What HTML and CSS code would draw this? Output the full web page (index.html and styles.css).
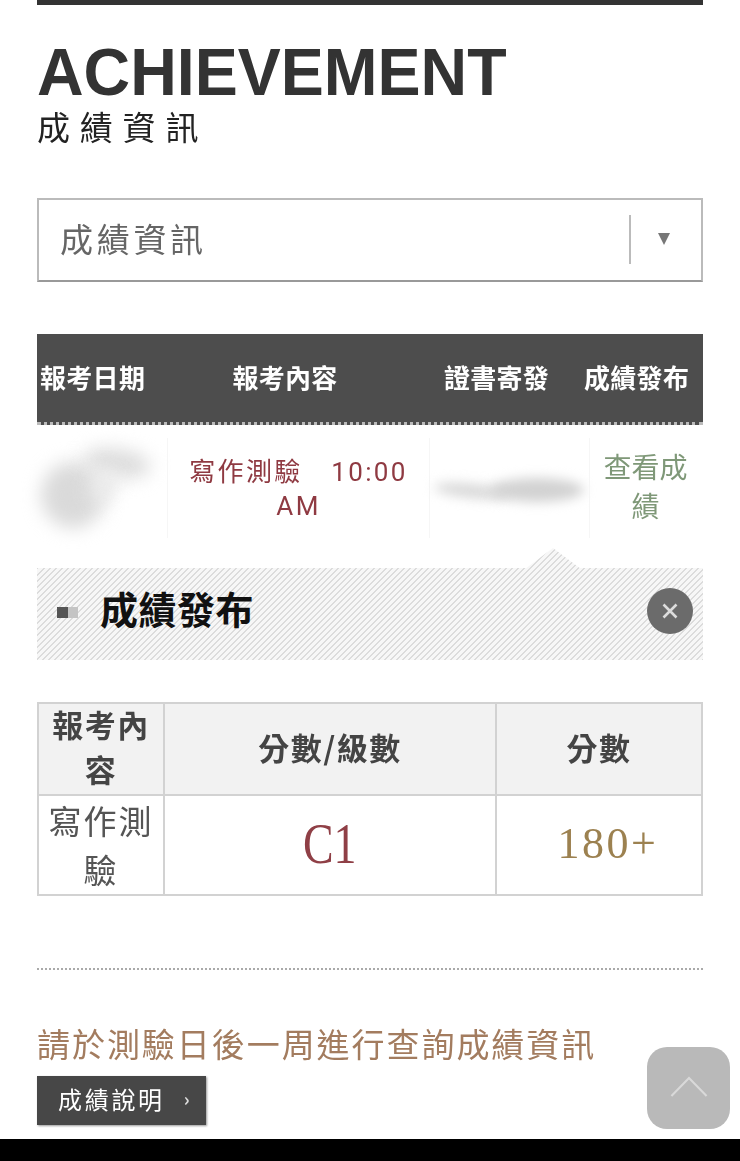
FILE: index.html
```html
<!DOCTYPE html>
<html lang="zh-Hant">
<head>
<meta charset="utf-8">
<title>成績資訊</title>
<link rel="stylesheet" href="styles.css">
</head>
<body>
<main class="page">
  <header class="heading">
    <h1 class="title">ACHIEVEMENT</h1>
    <p class="subtitle">成績資訊</p>
  </header>

  <div class="select">
    <span class="select-label">成績資訊</span>
    <span class="select-arrow"><span class="arrow-glyph"></span></span>
  </div>

  <section class="list">
    <div class="list-head">
      <div class="head-cell head-date">報考日期</div>
      <div class="head-cell head-content">報考內容</div>
      <div class="head-cell head-cert">證書寄發</div>
      <div class="head-cell head-result">成績發布</div>
    </div>
    <div class="list-row">
      <div class="row-cell cell-date"><span class="smudge smudge-a"></span><span class="smudge smudge-b"></span><span class="smudge smudge-c"></span></div>
      <div class="row-cell cell-content">寫作測驗　10:00 AM</div>
      <div class="row-cell cell-cert"><span class="smudge smudge-d"></span><span class="smudge smudge-e"></span></div>
      <div class="row-cell cell-result">查看成績</div>
    </div>
  </section>

  <section class="panel">
    <span class="panel-mark"><i class="mark-dark"></i><i class="mark-light"></i></span>
    <h2 class="panel-title">成績發布</h2>
    <span class="panel-close">
      <svg viewBox="0 0 20 20" width="20" height="20"><path d="M3.500 3.500L16.500 16.500M16.500 3.500L3.500 16.500" stroke="#dcdcdc" stroke-width="2.600" fill="none"/></svg>
    </span>
  </section>

  <table class="scores">
    <colgroup><col class="col-a"><col class="col-b"><col class="col-c"></colgroup>
    <thead>
      <tr><th><div class="th-text">報考內容</div></th><th><div class="th-text">分數/級數</div></th><th><div class="th-text">分數</div></th></tr>
    </thead>
    <tbody>
      <tr><td class="score-name">寫作測驗</td><td class="score-level"><span class="level-text">C1</span></td><td class="score-value">180+</td></tr>
    </tbody>
  </table>

  <div class="dots"></div>

  <p class="note">請於測驗日後一周進行查詢成績資訊</p>
  <a class="btn">成績說明<span class="btn-chevron">›</span></a>
</main>

<a class="to-top">
  <svg viewBox="0 0 40 22" width="38" height="21"><path d="M1.500 21L20 2L38.500 21" stroke="#d9d9d9" stroke-width="2.200" fill="none"/></svg>
</a>
<div class="nav-strip"></div>
</body>
</html>
```

FILE: styles.css
```css
* { box-sizing: border-box; }
html, body { margin: 0; padding: 0; background: #fff; }
body {
  width: 740px;
  height: 1161px;
  overflow: hidden;
  position: relative;
  font-family: "Liberation Sans", "Noto Sans CJK TC", sans-serif;
}
.page {
  width: 666px;
  margin-left: 37px;
  border-top: 5px solid #333;
  filter: blur(0.35px);
}
.heading { padding-top: 32px; }
.title {
  margin: 0;
  font-size: 67px;
  line-height: 70px;
  font-weight: 700;
  letter-spacing: 0;
  color: #333;
  white-space: nowrap;
  transform: scaleX(0.963);
  transform-origin: left center;
}
.subtitle {
  margin: 0;
  padding-top: 1px;
  font-family: "Noto Sans CJK TC", sans-serif;
  font-size: 33px;
  line-height: 36px;
  letter-spacing: 9.800px;
  font-weight: 400;
  color: #222;
}
.select {
  margin-top: 54px;
  height: 84px;
  border: 2px solid #bbb;
  border-bottom-color: #999;
  display: flex;
  align-items: center;
  justify-content: space-between;
  padding-left: 21px;
}
.select-label {
  font-family: "Noto Sans CJK TC", sans-serif;
  font-size: 33px;
  letter-spacing: 3.700px;
  font-weight: 400;
  line-height: 44px;
  margin-top: -4px;
  color: #666;
}
.select-arrow {
  width: 72px;
  height: 49px;
  margin-top: -2px;
  border-left: 2px solid #bbb;
  display: flex;
  align-items: center;
  justify-content: center;
  padding-right: 4px;
}
.arrow-glyph {
  width: 0;
  height: 0;
  border-left: 6px solid transparent;
  border-right: 6px solid transparent;
  border-top: 12px solid #777;
}
.list { margin-top: 52px; }
.list-head {
  height: 91px;
  background: #4d4d4d;
  border-bottom: 3px dotted #bbb;
  display: grid;
  grid-template-columns: 130px 263px 159px 114px;
  align-items: center;
  padding-bottom: 3px;
}
.head-cell {
  font-family: "Noto Sans CJK TC", sans-serif;
  font-size: 26px;
  font-weight: 700;
  color: #fff;
  letter-spacing: 0.300px;
  white-space: nowrap;
  text-align: center;
}
.head-date { text-align: left; padding-left: 3px; }
.head-content { padding-right: 27px; }
.head-cert { padding-right: 26px; }
.head-result { text-align: left; margin-left: -5px; }
.list-row {
  height: 125px;
  display: grid;
  grid-template-columns: 130px 263px 159px 114px;
  align-items: center;
}
.row-cell {
  height: 100px;
  position: relative;
  text-align: center;
  font-family: Roboto, "Noto Sans CJK TC", sans-serif;
}
.cell-content {
  border-left: 1px solid #f6f6f6;
  border-right: 1px solid #f6f6f6;
  padding-top: 17px;
  font-size: 26px;
  line-height: 34px;
  letter-spacing: 2.400px;
  font-weight: 400;
  color: #8f3a42;
}
.cell-result {
  border-left: 1px solid #f6f6f6;
  padding: 11px 14px 0 12px;
  font-size: 28px;
  line-height: 39px;
  letter-spacing: 0;
  font-weight: 400;
  color: #7f9878;
}
.smudge {
  position: absolute;
  background: #cfcfcf;
  border-radius: 50%;
  filter: blur(9px);
}
.smudge-a { left: 4px; top: 24px; width: 64px; height: 66px; background: #dadada; }
.smudge-b { left: 46px; top: 11px; width: 68px; height: 28px; background: #dcdcdc; transform: rotate(8deg); }
.smudge-c { left: 54px; top: 30px; width: 26px; height: 36px; background: #ebebeb; transform: rotate(30deg); }
.smudge-d { left: 4px; top: 46px; width: 76px; height: 14px; background: #d8d8d8; filter: blur(6px); transform: rotate(6deg); }
.smudge-e { left: 60px; top: 40px; width: 94px; height: 24px; background: #d2d2d2; filter: blur(6px); }
.panel {
  margin-top: 18px;
  height: 92px;
  position: relative;
  display: flex;
  align-items: center;
  padding-left: 20px;
  background: repeating-linear-gradient(135deg, #dcdcdc 0, #dcdcdc 1.414px, #f7f7f7 1.414px, #f7f7f7 4.243px);
}
.panel::before {
  content: "";
  position: absolute;
  left: 488px;
  top: -20px;
  width: 56px;
  height: 21px;
  clip-path: polygon(0 100%, 50% 0, 100% 100%);
  background: repeating-linear-gradient(135deg, #dcdcdc 0, #dcdcdc 1.414px, #f7f7f7 1.414px, #f7f7f7 4.243px);
}
.panel-mark { display: flex; width: 21px; height: 11px; margin-top: -4px; }
.mark-dark { width: 11px; background: #555; }
.mark-light { width: 10px; background: #c4c4c4; }
.panel-title {
  margin: -12px 0 0 22px;
  font-family: "Noto Sans CJK TC", sans-serif;
  font-size: 38px;
  line-height: 50px;
  letter-spacing: 0.500px;
  font-weight: 700;
  color: #111;
}
.panel-close {
  position: absolute;
  right: 10px;
  top: 20px;
  width: 46px;
  height: 46px;
  border-radius: 50%;
  background: #6b6b6b;
  display: flex;
  align-items: center;
  justify-content: center;
}
.scores {
  margin-top: 42px;
  width: 666px;
  table-layout: fixed;
  border-collapse: separate;
  border-spacing: 0;
  border-top: 2px solid #d2d2d2;
  border-left: 2px solid #d2d2d2;
  font-family: "Noto Sans CJK TC", sans-serif;
}
.col-a { width: 126px; }
.col-b { width: 332px; }
.col-c { width: 206px; }
.scores th, .scores td {
  border-right: 2px solid #d2d2d2;
  border-bottom: 2px solid #d2d2d2;
  text-align: center;
  padding: 0;
}
.scores th {
  height: 92px;
  background: #f2f2f2;
  font-size: 31px;
  line-height: 45px;
  font-weight: 700;
  letter-spacing: 1.500px;
  color: #444;
}
.th-text { margin-top: -6px; }
.scores td { height: 99px; }
.scores .score-name {
  font-size: 33px;
  line-height: 49px;
  font-weight: 400;
  letter-spacing: 2px;
  color: #555;
}
.scores .score-level {
  font-family: "Liberation Serif", serif;
  font-size: 56px;
  line-height: 60px;
  padding-bottom: 3px;
  color: #8f3f46;
}
.level-text { display: inline-block; transform: scaleX(0.82); }
.scores .score-value {
  font-family: "Liberation Serif", serif;
  font-size: 44px;
  letter-spacing: 2.500px;
  color: #9c8150;
  padding: 0 0 3px 18px;
}
.dots {
  margin-top: 72px;
  height: 2px;
  border-top: 2px dotted #aaa;
}
.note {
  margin: 49px 0 0;
  font-family: "Noto Sans CJK TC", sans-serif;
  font-size: 33px;
  line-height: 48px;
  letter-spacing: 1.950px;
  font-weight: 400;
  color: #a37c5f;
  white-space: nowrap;
}
.btn {
  margin-top: 9px;
  width: 169px;
  height: 49px;
  display: flex;
  align-items: center;
  padding: 0 0 5px 21px;
  background: #474747;
  box-shadow: 1px 1px 2px #999;
  font-family: "Noto Sans CJK TC", sans-serif;
  font-size: 24px;
  letter-spacing: 2.700px;
  font-weight: 400;
  color: #fff;
}
.btn-chevron { margin-left: 19px; font-size: 18px; font-weight: 700; color: #ddd; }
.to-top {
  position: absolute;
  left: 647px;
  top: 1047px;
  width: 83px;
  height: 82px;
  border-radius: 20px;
  background: #b9b9b9;
  display: flex;
  align-items: center;
  justify-content: center;
  padding-bottom: 3px;
}
.nav-strip {
  position: absolute;
  left: 0;
  right: 0;
  bottom: 0;
  height: 22px;
  background: #000;
}
```
